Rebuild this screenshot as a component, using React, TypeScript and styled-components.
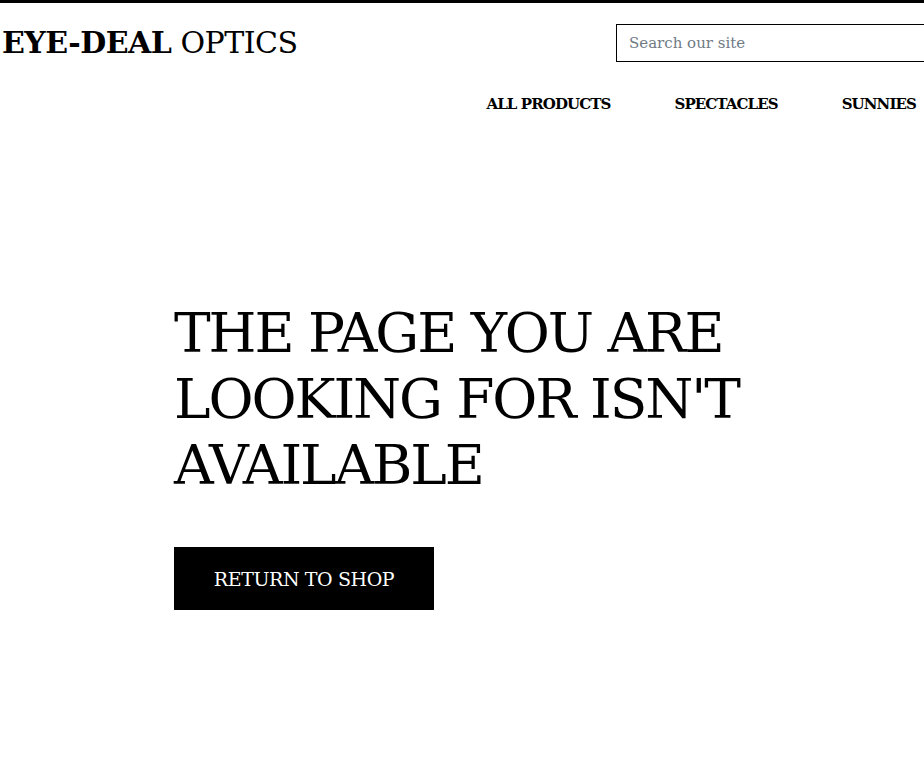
import React from 'react'
import styled, { createGlobalStyle } from 'styled-components'

const GlobalStyle = createGlobalStyle`
  html, body {
    margin: 0;
    padding: 0;
    background: #fff;
    overflow-x: hidden;
  }
  body {
    font-family: 'DejaVu Serif', 'Liberation Serif', serif;
    color: #000;
    border-top: 3px solid #000;
  }
`

const Page = styled.div`
  width: 924px;
  min-height: 767px;
  display: flex;
  flex-direction: column;
`

const Header = styled.header`
  display: flex;
  align-items: center;
  justify-content: space-between;
  height: 79px;
  padding-left: 2px;
`

const Logo = styled.a`
  font-size: 30px;
  color: #000;
  text-decoration: none;
  letter-spacing: -0.5px;
  white-space: nowrap;

  strong {
    font-weight: 700;
  }
`

const SearchInput = styled.input`
  box-sizing: border-box;
  width: 320px;
  height: 38px;
  margin-right: -12px;
  padding: 0 12px;
  border: 1px solid #000;
  border-radius: 0;
  font-family: inherit;
  font-size: 15px;
  outline: none;

  &::placeholder {
    color: #6f7a85;
  }
`

const Nav = styled.nav`
  display: flex;
  justify-content: flex-end;
  gap: 64px;
  padding-right: 8px;
  height: 44px;
  align-items: center;
`

const NavLink = styled.a`
  font-size: 15px;
  font-weight: 700;
  color: #000;
  text-decoration: none;
  letter-spacing: -0.9px;
`

const Main = styled.main`
  padding: 174px 0 0 174px;
`

const Heading = styled.h1`
  margin: 0;
  max-width: 620px;
  font-size: 55px;
  font-weight: 400;
  line-height: 66px;
  letter-spacing: -2.1px;
`

const ReturnButton = styled.a`
  display: inline-flex;
  align-items: center;
  justify-content: center;
  width: 260px;
  height: 63px;
  margin-top: 49px;
  background: #000;
  color: #fff;
  font-size: 19px;
  text-decoration: none;
  letter-spacing: -0.4px;
`

export default function App() {
  return (
    <Page>
      <GlobalStyle />
      <Header>
        <Logo href="#">
          <strong>EYE-DEAL</strong> OPTICS
        </Logo>
        <SearchInput type="text" placeholder="Search our site" />
      </Header>
      <Nav>
        <NavLink href="#">ALL PRODUCTS</NavLink>
        <NavLink href="#">SPECTACLES</NavLink>
        <NavLink href="#">SUNNIES</NavLink>
      </Nav>
      <Main>
        <Heading>THE PAGE YOU ARE LOOKING FOR ISN'T AVAILABLE</Heading>
        <ReturnButton href="#">RETURN TO SHOP</ReturnButton>
      </Main>
    </Page>
  )
}
